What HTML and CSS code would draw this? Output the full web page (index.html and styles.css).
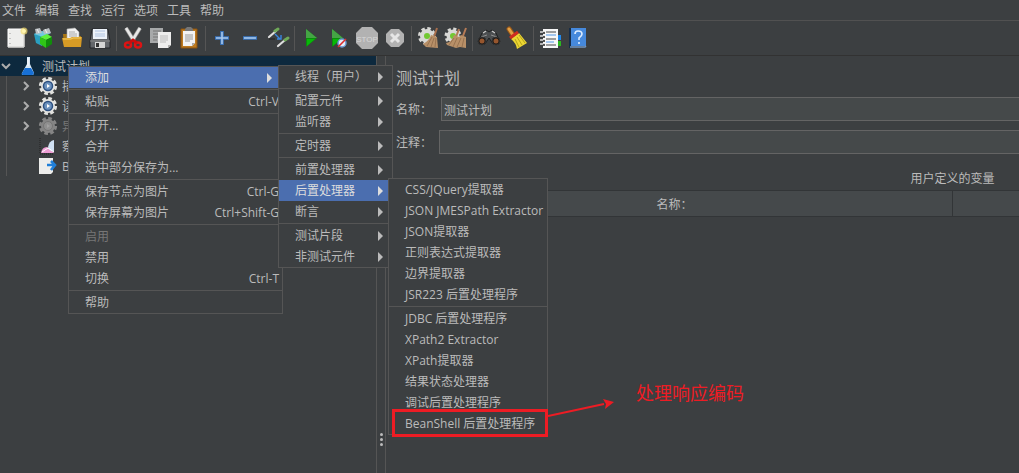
FILE: index.html
```
<!DOCTYPE html>
<html lang="zh-CN">
<head>
    <meta charset="UTF-8">
    <title>测试计划</title>
    <link rel="stylesheet" href="styles.css">
</head>
<body>

<nav class="menubar">
    <button>文件</button>
    <button>编辑</button>
    <button>查找</button>
    <button>运行</button>
    <button>选项</button>
    <button>工具</button>
    <button>帮助</button>
</nav>

<div class="toolbar">
    <button aria-label="新建">
        <svg viewBox="0 0 24 24"><path d="M4 3h16v18H4z" fill="#eeeeec" stroke="#fff"/><path d="M4 21h16V6" fill="none" stroke="#c4c4c0"/><path d="M6 7v1M6 12v1M6 17v1" stroke="#999"/><circle cx="20" cy="5" r="3.5" fill="#f6df72" opacity=".7"/><circle cx="20" cy="5" r="2" fill="#fff6b0"/></svg>
    </button>
    <button aria-label="模板">
        <svg viewBox="0 0 24 24"><path d="M2 8l8-3v15l-6-3z" fill="#2a9fc0"/><path d="M2 8l8-3 9 2-8 4z" fill="#72c8e0"/><path d="M3 3l5-1 2 5-6 1zM11 4l6-2 2 5-7 1z" fill="#b9bec2"/><path d="M5 3l2 4M13 3l2 4" stroke="#eee"/><path d="M8 11l7-3 5 3-6 3z" fill="#5ff03c"/><path d="M8 11l6 3v8l-6-4z" fill="#2fc616"/><path d="M14 14l6-3v7l-6 4z" fill="#118c0b"/></svg>
    </button>
    <button aria-label="打开">
        <svg viewBox="0 0 24 24"><path d="M3 8h6l2 2h10v11H4z" fill="#a87512"/><path d="M7 3l8-1 4 4v8H7z" fill="#f1f1f1" stroke="#aaa" stroke-width=".6"/><path d="M9 6h6M9 8h8M9 10h8" stroke="#aaa"/><path d="M2 12h8l2-1h10l-1 10H4z" fill="#d79b25"/><path d="M3 13h8l2-1h8" fill="none" stroke="#f5cf62"/></svg>
    </button>
    <button aria-label="保存">
        <svg viewBox="0 0 24 24"><path d="M4 3h16l2 12v7H2v-7z" fill="#63666a" stroke="#25272a"/><path d="M5 3h14v10H5z" fill="#eef3fa"/><path d="M7 5h10M7 8h10M7 10h10" stroke="#b0c4e2"/><path d="M2 15h20" stroke="#888"/><path d="M7 16h10v6H7z" fill="#d6d6d6"/><path d="M8 17h3v4H8z" fill="#333"/></svg>
    </button>
    <span class="divider"></span>
    <button aria-label="剪切">
        <svg viewBox="0 0 24 24"><path d="M5 2l8 13M19 2l-8 13" stroke="#929292" stroke-width="4"/><path d="M5 2l8 13M19 2l-8 13" stroke="#e8e8e8" stroke-width="2.5"/><ellipse cx="7" cy="19" rx="3" ry="2.5" fill="none" stroke="#dc1414" stroke-width="2.5"/><ellipse cx="17" cy="19" rx="3" ry="2.5" fill="none" stroke="#dc1414" stroke-width="2.5"/><path d="M8 17l4-3 4 3" fill="none" stroke="#c90d0d" stroke-width="3"/></svg>
    </button>
    <button aria-label="复制">
        <svg viewBox="0 0 24 24"><path d="M1 2h13v15H1z" fill="#a7a9aa"/><path d="M4 5h8M4 8h8M4 11h6M4 14h4" stroke="#777"/><path d="M9 6h13v13l-3 3H9z" fill="#ededed"/><path d="M11 10h8M11 12h8M11 14h8M11 16h6" stroke="#bbb"/><path d="M19 22v-3h3z" fill="#b0b0b0"/></svg>
    </button>
    <button aria-label="粘贴">
        <svg viewBox="0 0 24 24"><path d="M4 3h16v19H4z" fill="#bd7b21" stroke="#8b530e"/><path d="M6 5h12v12l-3 3H6z" fill="#f3f3f3"/><path d="M8 3l2-2h4l2 2v2H8z" fill="#777"/><path d="M8 9h8M8 11h8M8 13h8M8 15h5" stroke="#999"/><path d="M15 20v-3h3z" fill="#aaa"/></svg>
    </button>
    <span class="divider"></span>
    <button aria-label="全部展开">
        <svg viewBox="0 0 24 24"><path d="M12 5v14M5 12h14" stroke="#3974bd" stroke-width="3.6"/><path d="M12 6v12M6 12h12" stroke="#a8c8ec" stroke-width="1.6"/></svg>
    </button>
    <button aria-label="全部折叠">
        <svg viewBox="0 0 24 24"><path d="M5 12h14" stroke="#3974bd" stroke-width="3.6"/><path d="M6 12h12" stroke="#a8c8ec" stroke-width="1.6"/></svg>
    </button>
    <button aria-label="切换">
        <svg viewBox="0 0 24 24"><path d="M3 11l7-6M12 20l7-6" stroke="#dedede" stroke-width="2.2" stroke-linecap="round"/><path d="M9 5l3-2M19 14l3-2" stroke="#6fa958" stroke-width="3" stroke-linecap="round"/><path d="M3 13h6" stroke="#222"/><path d="M9 8l5 5M15 9v4h-4" fill="none" stroke="#3986e0" stroke-width="1.4"/></svg>
    </button>
    <span class="divider"></span>
    <button aria-label="启动">
        <svg viewBox="0 0 24 24"><path d="M7 3v18l11-9z" fill="#0c8c0c"/><path d="M7 3v9h11z" fill="#45a545"/><path d="M8 13h8l-8 7z" fill="#08b808"/></svg>
    </button>
    <button aria-label="不停顿开始">
        <svg viewBox="0 0 24 24"><path d="M5 3v18l11-9z" fill="#0c8c0c"/><path d="M5 3v9h11z" fill="#45a545"/><path d="M6 13h8l-8 7z" fill="#08b808"/><circle cx="15" cy="17" r="4" fill="#e3edf8" stroke="#6b99d1" stroke-width="1.5"/><path d="M11 21l8-8" stroke="#dc2a2a" stroke-width="1.6"/></svg>
    </button>
    <button aria-label="停止" disabled>
        <svg viewBox="0 0 24 24"><path d="M7 1h10l6 6v10l-6 6H7l-6-6V7z" fill="#b2b2b2"/><text x="12" y="16" class="stop-text">STOP</text></svg>
    </button>
    <button aria-label="关闭" disabled>
        <svg viewBox="0 0 24 24"><path d="M8 3h8l5 5v8l-5 5H8l-5-5V8z" fill="#b2b2b2"/><path d="M8 8l8 8M16 8l-8 8" stroke="#e6e6e6" stroke-width="3"/></svg>
    </button>
    <span class="divider"></span>
    <button aria-label="清除">
        <svg viewBox="0 0 24 24"><circle cx="11" cy="10" r="7" fill="#d8d8d5"/><circle cx="11" cy="10" r="7.5" fill="none" stroke="#d8d8d5" stroke-width="3" stroke-dasharray="3.4 2.5"/><circle cx="11" cy="10" r="3" fill="#72c832"/><path d="M21 2l-3 9" stroke="#a76e4b" stroke-width="2"/><path d="M15 9l6 2 1 11-12-1-3-3q6-3 8-9" fill="#b89068"/><path d="M16 11l-5 9M18 12l-3 9M20 12l-1 9" stroke="#8f6b4a" stroke-width=".8"/></svg>
    </button>
    <button aria-label="清除全部">
        <svg viewBox="0 0 24 24"><circle cx="9" cy="10" r="6.5" fill="#d8d8d5"/><circle cx="9" cy="10" r="7" fill="none" stroke="#d8d8d5" stroke-width="3" stroke-dasharray="3.1 2.4"/><circle cx="9" cy="10" r="3" fill="#72c832"/><path d="M15 3l-3 8M22 2l-3 8" stroke="#b67b56" stroke-width="2"/><path d="M10 9l5 2 2-2 5 2v11l-6-1-4 1-9-3-1-2q6-1 8-8" fill="#b89068"/><path d="M10 12l-5 7M13 12l-4 9M17 12l-4 9M20 12l-2 9" stroke="#8f6b4a" stroke-width=".8"/></svg>
    </button>
    <span class="divider"></span>
    <button aria-label="查找">
        <svg viewBox="0 0 24 24"><path d="M5 7l4-3 3 2 3-2 4 3 4 9-7 2-4-6-4 6-7-2z" fill="#4b4e50" stroke="#1e2021"/><path d="M6 7l3-2M18 7l-3-2" stroke="#c8c8c8" stroke-width="1.5"/><path d="M4 11l6-2M20 11l-6-2" stroke="#8d8d8d"/><circle cx="5" cy="15" r="4" fill="#191919" stroke="#333"/><circle cx="19" cy="15" r="4" fill="#191919" stroke="#333"/><circle cx="5" cy="15" r="2.5" fill="#96562e"/><circle cx="19" cy="15" r="2.5" fill="#96562e"/></svg>
    </button>
    <button aria-label="重置查找">
        <svg viewBox="0 0 24 24"><path d="M4 3l4 6" stroke="#985718" stroke-width="5" stroke-linecap="round"/><path d="M4 3l4 6" stroke="#e2a044" stroke-width="3" stroke-linecap="round"/><path d="M6 13l8-6 8 10-10 6q-1-6-6-10" fill="#ecd632"/><path d="M10 13l4 8M12 11l5 8M14 9l6 8" stroke="#a69415" stroke-width=".8"/><path d="M5 12l8-6" stroke="#cf2d20" stroke-width="3"/></svg>
    </button>
    <span class="divider"></span>
    <button aria-label="函数助手">
        <svg viewBox="0 0 24 24"><path d="M18 9h5v5h-5z" fill="#2387e8"/><path d="M18 15h5v5h-5z" fill="#2ab920"/><path d="M5 3h15v19H5z" fill="#f7f7f7"/><path d="M8 6h10M8 13h10M8 19h10" stroke="#444"/><path d="M8 9h10M8 16h8" stroke="#5196e6"/><path d="M2 6h5M2 10h5M2 14h5M2 18h5" stroke="#ddd" stroke-width="1.6"/><path d="M5 7h2M5 11h2M5 15h2M5 19h2" stroke="#222" stroke-width="1.4"/></svg>
    </button>
    <button aria-label="帮助">
        <svg viewBox="0 0 24 24"><path d="M3 2h3v20H3z" fill="#182d47"/><path d="M5 2h15v18H5z" fill="#4689dc"/><path d="M4 21h15l1-1" fill="none" stroke="#7396c0" stroke-width="1.5"/><path d="M9 8q0-3 3-3 4 0 4 3 0 2-3 4v2M13 16v2" fill="none" stroke="#dcecff" stroke-width="1.6"/></svg>
    </button>
</div>

<main class="workspace">
    <aside class="tree">
        <div class="node selected">
            <svg class="chevron" viewBox="0 0 12 12"><path d="M2 4l4 4 4-4"/></svg>
            <svg class="node-icon" viewBox="0 0 20 20"><path d="M9 1h3v7l4 9q0 2-2 2H6q-3 0-2-2l5-9z" fill="#d7e7f5"/><path d="M7 12h6l3 5q0 2-2 2H6q-3 0-2-2z" fill="#1870d5"/><path d="M10 2v8" stroke="#fff"/></svg>
            <span>测试计划</span>
        </div>
        <div class="children">
            <div class="node">
                <svg class="chevron" viewBox="0 0 12 12"><path d="M4 2l4 4-4 4"/></svg>
                <svg class="node-icon" viewBox="0 0 20 20"><circle class="gear-teeth" cx="10" cy="10" r="7.6"/><circle cx="10" cy="10" r="7" fill="#e2e2df"/><circle cx="10" cy="10" r="4.5" fill="#6d93bf" stroke="#2c4f80" stroke-width="1.5"/><path d="M9 8v4l3-2z" fill="#fff"/></svg>
                <span>插</span>
            </div>
            <div class="node">
                <svg class="chevron" viewBox="0 0 12 12"><path d="M4 2l4 4-4 4"/></svg>
                <svg class="node-icon" viewBox="0 0 20 20"><circle class="gear-teeth" cx="10" cy="10" r="7.6"/><circle cx="10" cy="10" r="7" fill="#e2e2df"/><circle cx="10" cy="10" r="4.5" fill="#6d93bf" stroke="#2c4f80" stroke-width="1.5"/><path d="M9 8v4l3-2z" fill="#fff"/></svg>
                <span>读</span>
            </div>
            <div class="node disabled">
                <svg class="chevron" viewBox="0 0 12 12"><path d="M4 2l4 4-4 4"/></svg>
                <svg class="node-icon" viewBox="0 0 20 20"><circle class="gear-teeth" cx="10" cy="10" r="7.6"/><circle cx="10" cy="10" r="7" fill="#858585"/><circle cx="10" cy="10" r="4.5" fill="#8f8f8f" stroke="#757575"/><path d="M9 8v4l3-2z" fill="#a2a2a2"/></svg>
                <span>异</span>
            </div>
            <div class="node leaf">
                <svg class="node-icon" viewBox="0 0 20 20"><path d="M2 2v16h14" fill="none" stroke="#222" stroke-dasharray="1 1"/><path d="M3 17q1-6 6-6 4 2 7 6z" fill="#ef9ed5"/><path d="M10 11q1-6 6-7v12q-5-1-6-5" fill="#cfe0f3"/><path d="M4 16l6-4 6 4" fill="none" stroke="#fff"/></svg>
                <span>察</span>
            </div>
            <div class="node leaf">
                <svg class="node-icon" viewBox="0 0 20 20"><path d="M1 2h14v14l-2 2H1z" fill="#ededeb"/><path d="M9 9h8M13 5l4 4-4 5" fill="none" stroke="#207fd8" stroke-width="2.6"/></svg>
                <span>B</span>
            </div>
        </div>
    </aside>

    <div class="splitter"><i></i><i></i><i></i></div>

    <section class="panel">
        <div class="panel-content">
            <h1>测试计划</h1>
            <div class="field">
                <label for="planName">名称：</label>
                <input id="planName" type="text" value="测试计划">
            </div>
            <div class="field comment">
                <label for="planComment">注释：</label>
                <input id="planComment" type="text">
            </div>
            <table class="variables">
                <caption>用户定义的变量</caption>
                <thead>
                    <tr><th>名称：</th><th></th></tr>
                </thead>
            </table>
        </div>
    </section>
</main>

<ul class="menu context-menu">
    <li><button class="active has-sub">添加</button>
        <ul class="menu add-menu">
            <li><button class="has-sub">线程（用户）</button></li>
            <li class="line"></li>
            <li><button class="has-sub">配置元件</button></li>
            <li><button class="has-sub">监听器</button></li>
            <li class="line"></li>
            <li><button class="has-sub">定时器</button></li>
            <li class="line"></li>
            <li><button class="has-sub">前置处理器</button></li>
            <li><button class="active has-sub">后置处理器</button>
                <ul class="menu post-menu">
                    <li><button>CSS/JQuery提取器</button></li>
                    <li><button>JSON JMESPath Extractor</button></li>
                    <li><button>JSON提取器</button></li>
                    <li><button>正则表达式提取器</button></li>
                    <li><button>边界提取器</button></li>
                    <li><button>JSR223 后置处理程序</button></li>
                    <li class="line"></li>
                    <li><button>JDBC 后置处理程序</button></li>
                    <li><button>XPath2 Extractor</button></li>
                    <li><button>XPath提取器</button></li>
                    <li><button>结果状态处理器</button></li>
                    <li><button>调试后置处理程序</button></li>
                    <li class="marked"><button>BeanShell 后置处理程序</button>
                        <div class="note">
                            <svg viewBox="0 0 66 22"><path d="M0 18L56 6" stroke="#ed1c24" stroke-width="2"/><path d="M55 1l11 3-9 7 1-5z" fill="#ed1c24"/></svg>
                            <span>处理响应编码</span>
                        </div>
                    </li>
                </ul>
            </li>
            <li><button class="has-sub">断言</button></li>
            <li class="line"></li>
            <li><button class="has-sub">测试片段</button></li>
            <li><button class="has-sub">非测试元件</button></li>
        </ul>
    </li>
    <li class="line"></li>
    <li><button>粘贴<kbd>Ctrl-V</kbd></button></li>
    <li class="line"></li>
    <li><button>打开...</button></li>
    <li><button>合并</button></li>
    <li><button>选中部分保存为...</button></li>
    <li class="line"></li>
    <li><button>保存节点为图片<kbd>Ctrl-G</kbd></button></li>
    <li><button>保存屏幕为图片<kbd>Ctrl+Shift-G</kbd></button></li>
    <li class="line"></li>
    <li><button disabled>启用</button></li>
    <li><button>禁用</button></li>
    <li><button>切换<kbd>Ctrl-T</kbd></button></li>
    <li class="line"></li>
    <li><button>帮助</button></li>
</ul>

</body>
</html>
```
FILE: styles.css
```
* {
    box-sizing: border-box;
}
body {
    margin: 0;
    height: 100vh;
    display: flex;
    flex-direction: column;
    overflow: hidden;
    background: #3c3f41;
    color: #bbb;
    font: 12px/20px "Open Sans", "Noto Sans CJK SC", sans-serif;
}
button,
input {
    font: inherit;
    color: inherit;
}
button {
    border: none;
    background: none;
    padding: 0;
}
.menubar {
    display: flex;
    gap: 9px;
    height: 21px;
    padding: 1px 0 0 2px;
    border-bottom: 1px solid #515151;
}
.toolbar {
    display: flex;
    align-items: center;
    height: 35px;
    padding-left: 2px;
    border-bottom: 1px solid #323232;
}
.toolbar button {
    width: 28px;
    height: 34px;
    display: flex;
    align-items: center;
    justify-content: center;
}
.toolbar svg {
    width: 24px;
    height: 24px;
}
.toolbar .divider {
    width: 1px;
    height: 25px;
    margin: 0 2px;
    background: #555;
}
.stop-text {
    font: 8px "Liberation Sans", sans-serif;
    text-anchor: middle;
    fill: #d8d8d8;
}

.workspace {
    flex: 1;
    display: flex;
    min-height: 0;
}
.tree {
    flex: 0 0 36.9%;
}
.node {
    display: flex;
    align-items: center;
    height: 20px;
}
.node.selected {
    background: #0d293e;
}
.node.disabled span {
    color: #777;
}
.node span {
    margin-left: 4px;
    padding-top: 2px;
}
.chevron {
    width: 12px;
    height: 12px;
    margin-right: 6px;
    fill: none;
    stroke: #adadad;
    stroke-width: 2;
}
.node-icon {
    width: 20px;
    height: 20px;
}
.children {
    margin-left: 6px;
    padding-left: 13px;
    border-left: 1px solid #555;
}
.leaf {
    padding-left: 18px;
}
.gear-teeth {
    fill: none;
    stroke: #e2e2df;
    stroke-width: 3;
    stroke-dasharray: 3.6 2.37;
}
.disabled .gear-teeth {
    stroke: #858585;
}
.splitter {
    width: 10px;
    display: flex;
    flex-direction: column;
    align-items: center;
    justify-content: flex-end;
    gap: 2px;
    padding-bottom: 27px;
    border: solid #555;
    border-width: 0 1px;
}
.splitter i {
    width: 3px;
    height: 3px;
    border-radius: 50%;
    background: #bbb;
}

.panel {
    flex: 1;
    min-width: 0;
    overflow: hidden;
    padding: 10px 4px;
}
.panel-content {
    width: 180%;
}
.panel h1 {
    margin: 0 0 7px 6px;
    font-size: 16px;
    line-height: 24px;
    font-weight: normal;
}
.field {
    display: flex;
    align-items: center;
    gap: 9px;
    margin: 0 0 9px 6px;
}
.field label {
    padding-top: 2px;
}
.field.comment {
    gap: 7px;
}
.field input {
    flex: 1;
    height: 24px;
    padding: 1px 2px 0;
    background: #45494a;
    border: 1px solid #646464;
}
.variables {
    width: 100%;
    table-layout: fixed;
    border-collapse: collapse;
    margin-top: 14px;
}
.variables caption {
    height: 22px;
    padding-top: 1px;
}
.variables th {
    height: 26px;
    padding: 2px 0 0 6px;
    font-weight: normal;
    background: #45494b;
    border: 1px solid #323537;
}

.menu {
    position: absolute;
    z-index: 1;
    margin: 0;
    padding: 0;
    list-style: none;
    background: #3c3f41;
    border: 1px solid #555;
}
.menu li {
    position: relative;
}
.menu button {
    display: flex;
    align-items: center;
    justify-content: space-between;
    width: 100%;
    height: 21px;
    padding: 1px 3px 0 16px;
    white-space: nowrap;
}
.menu button:disabled {
    color: #777;
}
.menu .active {
    background: #4b6eaf;
    color: #ddd;
}
.menu .has-sub::after {
    content: "";
    margin-right: 6px;
    border: solid transparent;
    border-width: 5px 0 5px 5px;
    border-left-color: currentColor;
}
.menu .line {
    height: 1px;
    margin: 1px 0;
    background: #555;
}
.menu kbd {
    font: inherit;
}
.context-menu {
    left: 68px;
    top: 66px;
    width: 215px;
}
.context-menu > li > .has-sub::after {
    margin-right: 7px;
}
.add-menu {
    left: 209px;
    top: -2px;
    width: 115px;
}
.post-menu {
    left: 109px;
    top: -2px;
    width: 160px;
}
.marked::after {
    content: "";
    position: absolute;
    inset: -4px -1px -3px 3px;
    border: 3px solid #ed1c24;
    pointer-events: none;
}
.note {
    position: absolute;
    left: 159px;
    top: -32px;
    display: flex;
    gap: 22px;
    color: #ed1c24;
    font-size: 18px;
    line-height: 24px;
    white-space: nowrap;
}
.note svg {
    width: 66px;
    height: 22px;
    margin-top: 17px;
}
```
